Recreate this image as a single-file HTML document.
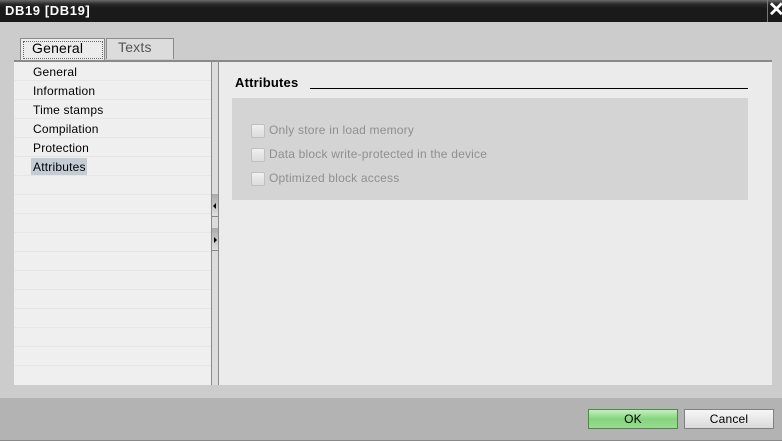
<!DOCTYPE html>
<html><head><style>
*{margin:0;padding:0;box-sizing:border-box}
body{width:782px;height:441px;background:#cccccc;font-family:"Liberation Sans",sans-serif;font-size:12px;position:relative;overflow:hidden;letter-spacing:0.2px}
.a{position:absolute}
.row{position:absolute;left:14px;width:197px;height:19px;border-bottom:1px solid #e6e6e6;padding-left:19px;line-height:20px;color:#000}
.cb{position:absolute;left:251px;width:14px;height:14px;border:1px solid #c0c0c0;border-radius:2px;background:linear-gradient(#f0f0f0,#dcdcdc)}
.lbl{position:absolute;left:269px;color:#8f8f8f;font-size:12px}
.btn{position:absolute;top:409px;height:20px;width:90px;text-align:center;line-height:18px;font-size:12px;border:1px solid #808080}
</style></head><body>
<div class="a" style="left:0;top:0;width:782px;height:22px;background:linear-gradient(#6a6a6a 0,#2a2a2a 4px,#1a1a1a 8px,#1a1a1a);"></div>
<div class="a" style="left:5px;top:3px;color:#fff;font-weight:bold;font-size:13px;letter-spacing:0.6px">DB19 [DB19]</div>
<div class="a" style="left:767px;top:0;width:1px;height:22px;background:#777"></div>
<div class="a" style="left:768px;top:-3px;color:#fff;font-size:20px;font-weight:bold">✕</div>

<div class="a" style="left:20px;top:38px;width:85px;height:23px;background:#ececec;border:1px solid #8a8a8a;border-bottom:none"></div>
<div class="a" style="left:23px;top:41px;width:80px;height:18px;border:1px dotted #666"></div>
<div class="a" style="left:32px;top:40px;font-size:14px;color:#000">General</div>
<div class="a" style="left:106px;top:38px;width:68px;height:21px;background:#dcdcdc;border:1px solid #8a8a8a;border-bottom:none"></div>
<div class="a" style="left:118px;top:39px;font-size:14px;color:#555">Texts</div>
<div class="a" style="left:14px;top:60px;width:758px;height:2px;background:#8a8a8a"></div>

<div class="a" style="left:14px;top:62px;width:197px;height:323px;background:#efefef"></div>
<div class="row" style="top:62px">General</div>
<div class="row" style="top:81px">Information</div>
<div class="row" style="top:100px">Time stamps</div>
<div class="row" style="top:119px">Compilation</div>
<div class="row" style="top:138px">Protection</div>
<div class="a" style="left:31px;top:158px;width:56px;height:18px;background:#c4ccd6"></div>
<div class="row" style="top:157px">Attributes</div>
<div class="row" style="top:176px"></div><div class="row" style="top:195px"></div><div class="row" style="top:214px"></div><div class="row" style="top:233px"></div><div class="row" style="top:252px"></div><div class="row" style="top:271px"></div><div class="row" style="top:290px"></div><div class="row" style="top:309px"></div><div class="row" style="top:328px"></div><div class="row" style="top:347px"></div>

<div class="a" style="left:211px;top:62px;width:8px;height:323px;background:#dcdcdc;border-left:1px solid #8a8a8a;border-right:1px solid #8a8a8a"></div>
<div class="a" style="left:212px;top:194px;width:6px;height:23px;background:linear-gradient(#aaa,#e0e0e0);border-bottom:1px solid #888"></div>
<div class="a" style="left:213px;top:203px;width:0;height:0;border:3px solid transparent;border-right-color:#000;border-left:none"></div>
<div class="a" style="left:212px;top:228px;width:6px;height:23px;background:linear-gradient(#aaa,#e0e0e0);border-bottom:1px solid #888"></div>
<div class="a" style="left:214px;top:237px;width:0;height:0;border:3px solid transparent;border-left-color:#000;border-right:none"></div>

<div class="a" style="left:219px;top:62px;width:553px;height:323px;background:#ebebeb"></div>
<div class="a" style="left:235px;top:75px;font-weight:bold;font-size:13px;color:#000">Attributes</div>
<div class="a" style="left:310px;top:88px;width:438px;height:1px;background:#000"></div>
<div class="a" style="left:232px;top:98px;width:516px;height:102px;background:#d4d4d4"></div>
<div class="cb" style="top:124px"></div><div class="lbl" style="top:123px">Only store in load memory</div>
<div class="cb" style="top:148px"></div><div class="lbl" style="top:147px">Data block write-protected in the device</div>
<div class="cb" style="top:172px"></div><div class="lbl" style="top:171px">Optimized block access</div>

<div class="a" style="left:0;top:398px;width:782px;height:43px;background:#b3b3b3"></div>
<div class="a" style="left:0;top:440px;width:782px;height:1px;background:#888"></div>
<div class="btn" style="left:588px;background:linear-gradient(#c8ecc4,#86d47e 50%,#9adc92);border-color:#4a8a44">OK</div>
<div class="btn" style="left:684px;background:linear-gradient(#f6f6f6,#dadada);">Cancel</div>
</body></html>
